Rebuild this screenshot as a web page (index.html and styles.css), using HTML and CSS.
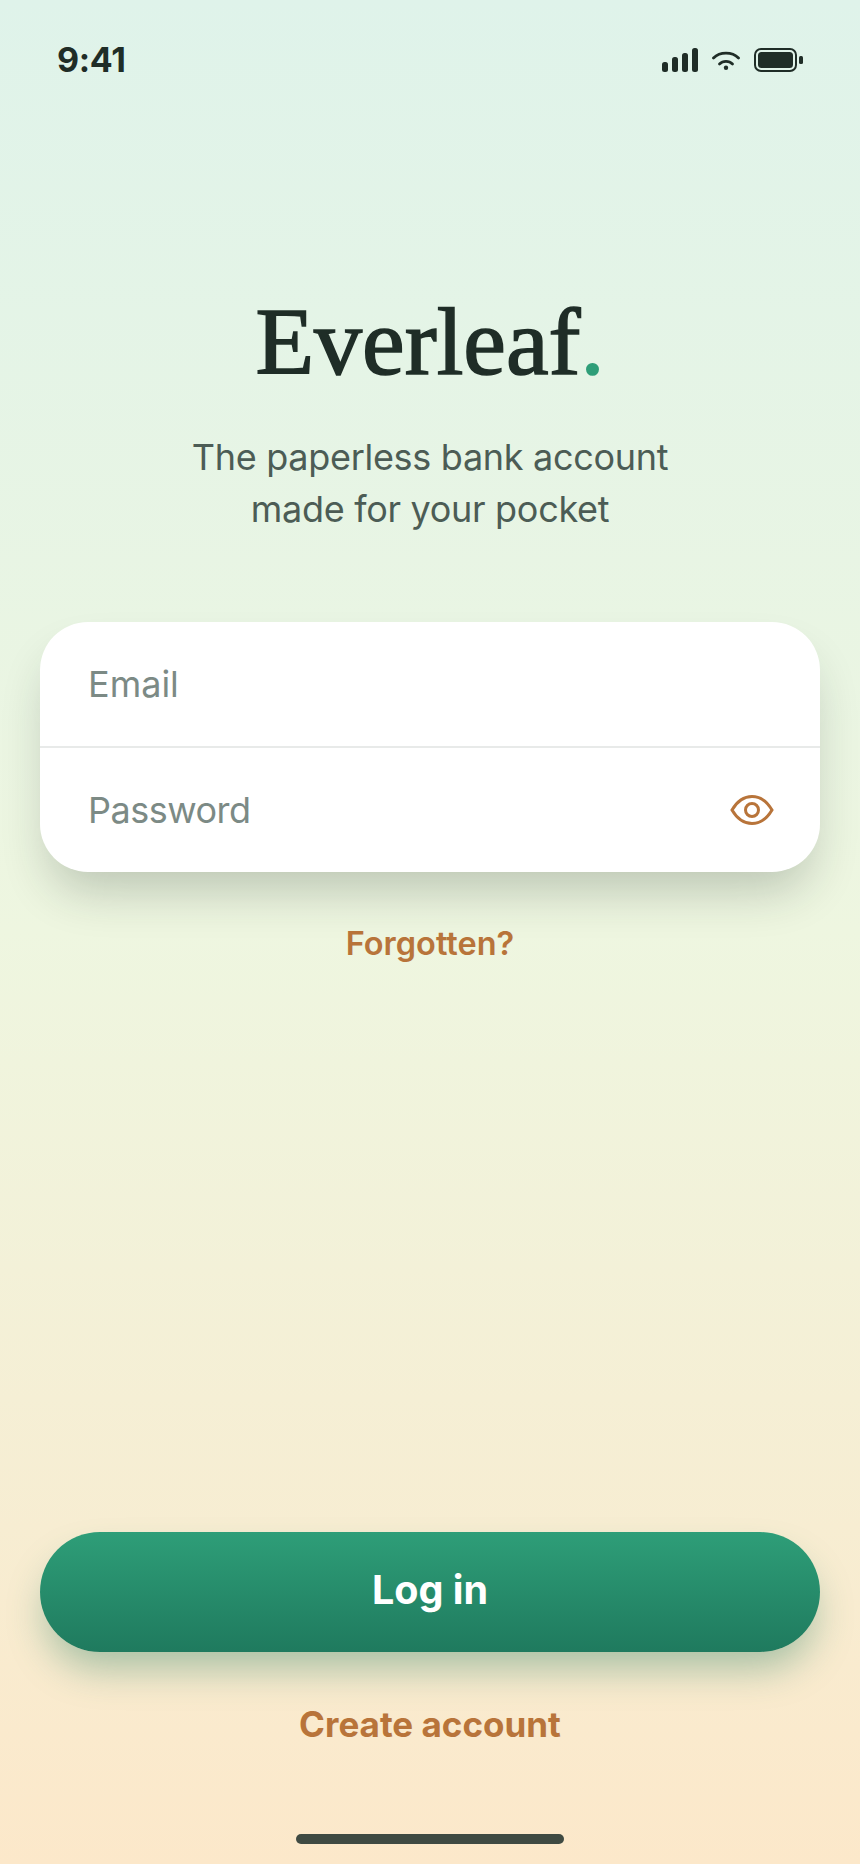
FILE: index.html
```html
<!DOCTYPE html>
<html lang="en">
<head>
  <meta charset="UTF-8" />
  <meta name="viewport" content="width=device-width, initial-scale=1" />
  <title>Everleaf</title>
  <link rel="stylesheet" href="styles.css">
</head>
<body>
  <div class="screen">
    <div class="status-bar">
      <span class="time">9:41</span>
      <div class="status-icons">
        <svg class="signal" width="36" height="24" viewBox="0 0 36 24">
          <rect x="0" y="14" width="6" height="10" rx="2.5" />
          <rect x="10" y="9" width="6" height="15" rx="2.5" />
          <rect x="20" y="5" width="6" height="19" rx="2.5" />
          <rect x="30" y="0" width="6" height="24" rx="2.5" />
        </svg>
        <svg class="wifi" width="28" height="20" viewBox="0 0 28 20">
          <path d="M1.500 8C8 1.500 20 1.500 26.500 8" />
          <path d="M7.500 14C11 10.500 17 10.500 20.500 14" />
          <circle cx="14" cy="17.800" r="2.200" />
        </svg>
        <svg class="battery" width="49" height="24" viewBox="0 0 49 24">
          <rect x="1" y="1" width="41" height="22" rx="6" />
          <rect class="charge" x="4" y="4" width="35" height="16" rx="3.500" />
          <rect class="charge" x="45" y="8" width="4" height="8" rx="1.500" />
        </svg>
      </div>
    </div>

    <div class="brand">
      <h1 class="logo">Everleaf<span class="logo-dot">.</span></h1>
      <p class="tagline">The paperless bank account<br>made for your pocket</p>
    </div>

    <form class="login-card">
      <div class="field field-email"><span class="placeholder">Email</span></div>
      <div class="field field-password">
        <span class="placeholder">Password</span>
        <svg class="eye" width="44" height="32" viewBox="0 0 44 32">
          <path d="M2 16C7 7.500 14 2.500 22 2.500S37 7.500 42 16C37 24.500 30 29.500 22 29.500S7 24.500 2 16Z" />
          <circle cx="22" cy="16" r="6.500" />
        </svg>
      </div>
    </form>
    <a class="forgot">Forgotten?</a>

    <div class="actions">
      <button class="login-btn" type="button">Log in</button>
      <a class="create">Create account</a>
    </div>
    <div class="home-bar"></div>
  </div>
</body>
</html>
```

FILE: styles.css
```css
html, body {
  margin: 0;
  padding: 0;
}
body {
  font-family: Inter, "Liberation Sans", sans-serif;
  color: #1f2d27;
}
.screen {
  box-sizing: border-box;
  width: 860px;
  height: 1864px;
  padding: 0 40px 20px;
  display: flex;
  flex-direction: column;
  background: linear-gradient(180deg, #dff3ea 0%, #eef6e0 50%, #fce8ca 100%);
}
.status-bar {
  display: flex;
  justify-content: space-between;
  align-items: center;
  height: 40px;
  margin-top: 40px;
  padding: 0 17px;
}
.time {
  font-size: 34px;
  font-weight: 700;
  line-height: 40px;
  letter-spacing: -0.3px;
}
.status-icons {
  display: flex;
  align-items: center;
  gap: 14px;
}
.signal {
  fill: #1f2d27;
}
.wifi {
  fill: #1f2d27;
}
.wifi path {
  fill: none;
  stroke: #1f2d27;
  stroke-width: 2.8;
  stroke-linecap: round;
}
.battery {
  fill: none;
  stroke: #1f2d27;
  stroke-width: 2;
}
.battery .charge {
  fill: #1f2d27;
  stroke: none;
}
.brand {
  margin-top: 206px;
  text-align: center;
}
.logo {
  margin: 0;
  font-family: "Liberation Serif", serif;
  font-size: 96px;
  font-weight: 400;
  line-height: 112px;
  -webkit-text-stroke: 1.6px currentColor;
  color: #1f2d27;
}
.logo-dot {
  color: #2e9e78;
}
.tagline {
  margin: 33px 0 0;
  font-size: 36px;
  line-height: 52px;
  letter-spacing: -0.3px;
  color: #4c5c55;
}
.login-card {
  margin-top: 87px;
  background: #fff;
  border-radius: 48px;
  box-shadow: 0 28px 48px -10px rgba(31, 45, 39, 0.24);
}
.field {
  box-sizing: border-box;
  padding: 0 46px 0 48px;
  display: flex;
  align-items: center;
  justify-content: space-between;
}
.field-email {
  height: 124px;
}
.field-password {
  height: 126px;
  border-top: 2px solid #e8eae9;
}
.placeholder {
  font-size: 36px;
  letter-spacing: -0.5px;
  color: #7c8a85;
}
.field-email .placeholder {
  letter-spacing: 0;
}
.eye {
  fill: none;
  stroke: #b8743a;
  stroke-width: 3;
}
.forgot {
  margin-top: 50px;
  text-align: center;
  font-size: 32.500px;
  font-weight: 600;
  line-height: 44px;
  color: #b8743a;
}
.actions {
  margin-top: auto;
  display: flex;
  flex-direction: column;
  align-items: center;
}
.login-btn {
  width: 100%;
  height: 120px;
  padding: 0 0 4px;
  border: none;
  border-radius: 60px;
  background: linear-gradient(180deg, #2e9e78 0%, #1f7a5e 100%);
  box-shadow: 0 22px 38px -6px rgba(31, 122, 94, 0.38);
  color: #fff;
  font-family: inherit;
  font-size: 39.500px;
  font-weight: 700;
}
.create {
  margin-top: 50px;
  font-size: 35px;
  font-weight: 700;
  line-height: 44px;
  color: #b8743a;
}
.home-bar {
  align-self: center;
  width: 268px;
  height: 10px;
  margin-top: 88px;
  border-radius: 5px;
  background: #3f4a42;
}
```
